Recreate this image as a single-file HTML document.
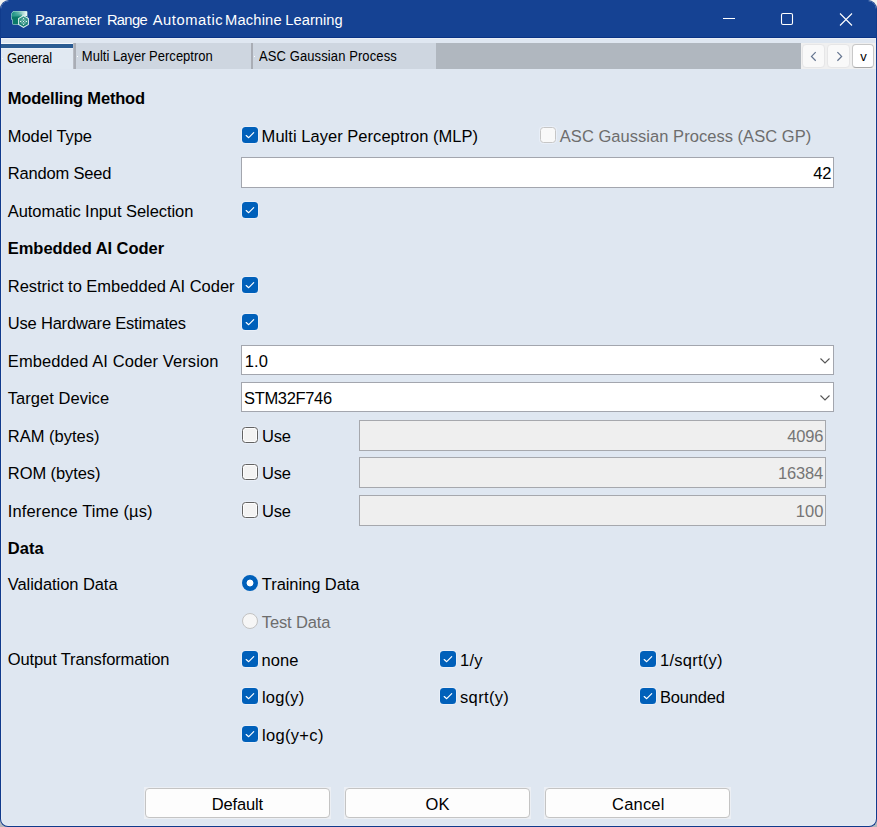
<!DOCTYPE html>
<html><head><meta charset="utf-8">
<title>Parameter Range Automatic Machine Learning</title>
<style>
html,body{margin:0;padding:0;}
body{width:877px;height:827px;overflow:hidden;background:#f3f3f0;font-family:"Liberation Sans",sans-serif;font-size:16.5px;color:#000;position:relative;}
#bgb{position:absolute;left:0;top:800px;width:877px;height:27px;background:#b4b7bc;}
#win{position:absolute;left:0;top:0;width:875px;height:825px;border:1px solid #103b8c;border-top-color:#154293;border-radius:9px 9px 8px 8px;background:#dfe7f1;overflow:hidden;box-shadow:inset 0 0 0 1px #e6ebf4;}
#title{position:absolute;left:0;top:0;width:875px;height:36px;background:#154293;color:#fff;border-bottom:1px solid #0a3384;}
#title .t{position:absolute;left:34px;top:8.5px;font-size:14.7px;line-height:20px;white-space:nowrap;letter-spacing:0.036px;}
#hl{position:absolute;left:0;top:37px;width:875px;height:1px;background:#ebeff6;}
#body{position:absolute;left:-1px;top:-1px;width:877px;height:827px;}
.tx{position:absolute;white-space:nowrap;line-height:20px;font-size:16.5px;transform:scaleY(1.04);transform-origin:0 16.7px;}
.tt{font-size:14.7px;color:#fff;transform:scaleY(1.055);transform-origin:0 15.1px;}
.b{font-weight:bold;}
.g{color:#6d6d6d;}
.g2{color:#757575;}
.cb{position:absolute;width:16px;height:16px;border-radius:3.5px;box-sizing:border-box;box-shadow:0 0 0 1px rgba(236,242,251,0.7);}
.cb.on{background:#0060ba;}
.cb svg{display:block;}
.cb.off{background:#f3f3f3;border:1px solid #626262;box-shadow:inset 0 0 0 1px #fdfdfd,0 0 0 1px rgba(236,242,251,0.7);}
.cb.dis{background:#f9f9f9;border:1px solid #c6c6c6;}
.rd{position:absolute;width:16px;height:16px;border-radius:50%;box-sizing:border-box;}
.rd.on{background:radial-gradient(circle at 50% 50%,#fff 0,#fff 3.0px,#0060ba 3.8px,#0060ba 100%);}
.rd.dis{background:#f6f6f6;border:1px solid #c2c2c2;}
.inp{position:absolute;background:#fff;border:1px solid #a3a6ae;}
.inp.d{background:#efefef;border-color:#a6a8ad;}
.chev{position:absolute;right:2.5px;top:11px;}
.bb{position:absolute;top:787px;width:187px;height:32px;background:#eceff4;}
.btn{position:absolute;left:1px;top:1px;width:183px;height:28px;border:1px solid #c4c4c4;border-radius:4px;background:#fdfdfd;text-align:center;line-height:29px;font-size:16.5px;}
/* tabs */
#tabbar{position:absolute;left:1px;top:43px;width:875px;height:26px;background:#b0b7bf;}
.tab{position:absolute;top:0;height:26px;background:#ced6e0;font-size:13px;line-height:16px;white-space:nowrap;}
.tab span{position:absolute;top:5.7px;transform:scaleY(1.08);transform-origin:0 12.5px;}
.dot{position:absolute;top:13px;width:1px;height:1px;background:#fff;}
.sep{position:absolute;top:0;width:3px;height:26px;background:linear-gradient(90deg,#b8bcc4 0,#b8bcc4 1px,#a9adb5 1px,#a9adb5 3px);}
#tabbtns{position:absolute;left:800px;top:0;width:75px;height:26px;background:#f0f0f0;}
.tb{position:absolute;top:1px;width:20px;height:22px;border:1px solid #e6e6e7;border-radius:4px;background:#f9f9f9;}
.tb svg{position:absolute;left:0;top:0;}
</style></head><body>
<div id="bgb"></div>
<div id="win">
<div id="title">
<svg style="position:absolute;left:-1px;top:-1px" width="40" height="37" viewBox="0 0 40 37">
<defs>
<linearGradient id="g1" x1="0" y1="0" x2="1" y2="0"><stop offset="0" stop-color="#169080"/><stop offset="0.45" stop-color="#5fb5a8"/><stop offset="1" stop-color="#f4fbfa"/></linearGradient>
<linearGradient id="g2" x1="0" y1="0" x2="0" y2="1"><stop offset="0" stop-color="#3e9c8f"/><stop offset="1" stop-color="#117a6c"/></linearGradient>
</defs>
<path d="M13.4 11 H26.4 Q27.4 11 27.4 12 V24.8 H13.6 Q12.3 24.8 12.3 23.4 V19.8 H11.2 V13.4 Z" fill="#b9e3dc"/>
<path d="M13.6 11.5 H26.2 Q26.9 11.5 26.9 12.2 V16.4 H11.8 V13.6 Z" fill="url(#g1)"/>
<path d="M11.8 16 H27 V24.3 H13.8 Q12.9 24.3 12.9 23.4 V19.4 H11.8 Z" fill="#0a7868"/>
<path d="M11.8 14.5 H22 V16.8 H11.8 Z" fill="#2e9a8b" opacity="0.7"/>
<path d="M23.5 15 L28.9 18.2 V24.8 L23.5 28 L18.1 24.8 V18.2 Z" fill="#e3f3f0"/>
<path d="M23.5 16.2 L27.9 18.8 V24.2 L23.5 26.8 L19.1 24.2 V18.8 Z" fill="url(#g2)"/>
<g fill="#e9f7f4">
<circle cx="23.5" cy="18.7" r="0.75"/><circle cx="23.5" cy="24.3" r="0.75"/><circle cx="20.7" cy="21.5" r="0.75"/><circle cx="26.3" cy="21.5" r="0.75"/>
<circle cx="22.1" cy="20.1" r="0.65"/><circle cx="24.9" cy="20.1" r="0.65"/><circle cx="22.1" cy="22.9" r="0.65"/><circle cx="24.9" cy="22.9" r="0.65"/><circle cx="23.5" cy="21.5" r="0.65"/>
</g>
</svg>

<svg style="position:absolute;left:716px;top:6px" width="150" height="26" viewBox="0 0 150 26" fill="none" stroke="#fff" stroke-width="1.1">
<path d="M6 11.5 H18"/>
<rect x="64.5" y="6.5" width="11" height="11" rx="1.5"/>
<path d="M123 6.5 L135 18.5 M135 6.5 L123 18.5"/>
</svg>
</div>
<div id="hl"></div>
<div id="body">
<div id="tabbar">
 <div class="tab" style="left:0;width:72px;background:#e1e9f2;"><div style="position:absolute;left:0;top:0;width:72px;height:1px;background:#f4f6fa"></div><div style="position:absolute;left:0;top:1px;width:73px;height:4px;background:#2a5b92"></div><div style="position:absolute;left:0;top:5px;width:72px;height:1px;background:#e9eef6"></div><i class="dot" style="left:1px;top:15px"></i><span style="left:6px;top:8.3px;letter-spacing:-0.18px">General</span></div>
 <div class="sep" style="left:72px"></div>
 <div class="tab" style="left:75px;width:175px"><i class="dot" style="left:1px"></i><span style="left:5.8px;letter-spacing:0.01px">Multi Layer Perceptron</span></div>
 <div class="sep" style="left:250px;width:2px;background:#a9adb5"></div>
 <div class="tab" style="left:252px;width:183px"><i class="dot" style="left:1px"></i><span style="left:6px;letter-spacing:0.1px">ASC Gaussian Process</span></div>
 <div id="tabbtns">
  <div class="tb" style="left:1px;width:21px"><svg width="20" height="22"><path d="M12.7 7.1 L8.5 11.4 L12.7 15.7" fill="none" stroke="#64748f" stroke-width="1.25"/></svg></div>
  <div class="tb" style="left:26px;width:21px"><svg width="20" height="22"><path d="M9.4 7.1 L13.6 11.4 L9.4 15.7" fill="none" stroke="#64748f" stroke-width="1.25"/></svg></div>
  <div class="tb" style="left:51px;background:#fff;border-color:#c8c8c8;border-bottom-color:#a8a8a8;font-size:13px;line-height:23.6px;text-align:center;text-indent:1px;">v</div>
 </div>
</div>
<div id="t0" class="tx b" style="left:7.80px;top:88.38px;letter-spacing:-0.200px">Modelling Method</div>
<div id="t1" class="tx " style="left:7.80px;top:125.88px;letter-spacing:-0.089px">Model Type</div>
<div id="t2" class="tx " style="left:7.80px;top:163.38px;letter-spacing:-0.186px">Random Seed</div>
<div id="t3" class="tx " style="left:7.80px;top:200.88px;letter-spacing:-0.063px">Automatic Input Selection</div>
<div id="t4" class="tx b" style="left:7.80px;top:238.38px;letter-spacing:-0.051px">Embedded AI Coder</div>
<div id="t5" class="tx " style="left:7.80px;top:275.88px;letter-spacing:-0.025px">Restrict to Embedded AI Coder</div>
<div id="t6" class="tx " style="left:7.80px;top:313.38px;letter-spacing:-0.199px">Use Hardware Estimates</div>
<div id="t7" class="tx " style="left:7.80px;top:350.88px;letter-spacing:0.099px">Embedded AI Coder Version</div>
<div id="t8" class="tx " style="left:7.80px;top:388.38px;letter-spacing:0.034px">Target Device</div>
<div id="t9" class="tx " style="left:7.80px;top:425.88px;letter-spacing:0.002px">RAM (bytes)</div>
<div id="t10" class="tx " style="left:7.80px;top:463.38px;letter-spacing:-0.083px">ROM (bytes)</div>
<div id="t11" class="tx " style="left:7.80px;top:500.88px;letter-spacing:0.126px">Inference Time (µs)</div>
<div id="t12" class="tx b" style="left:7.80px;top:538.38px;letter-spacing:-0.002px">Data</div>
<div id="t13" class="tx " style="left:7.80px;top:573.88px;letter-spacing:-0.065px">Validation Data</div>
<div id="t14" class="tx " style="left:7.80px;top:649.08px;letter-spacing:-0.121px">Output Transformation</div>
<div class="cb on" style="left:242px;top:127px"><svg width="16" height="16" viewBox="0 0 16 16"><path d="M4.2 8.5 L6.7 10.7 L11.7 5.7" fill="none" stroke="#fff" stroke-width="1.15" stroke-linecap="round" stroke-linejoin="round"/></svg></div>
<div id="t15" class="tx " style="left:261.60px;top:125.78px;letter-spacing:0.037px">Multi Layer Perceptron (MLP)</div>
<div class="cb dis" style="left:540px;top:127px"></div>
<div id="t16" class="tx g" style="left:559.80px;top:125.78px;letter-spacing:0.038px">ASC Gaussian Process (ASC GP)</div>
<div class="inp" style="left:241px;top:157px;width:591px;height:29px"></div>
<div id="t17" class="tx " style="left:813.18px;top:163.38px;letter-spacing:-0.010px">42</div>
<div class="cb on" style="left:242px;top:202px"><svg width="16" height="16" viewBox="0 0 16 16"><path d="M4.2 8.5 L6.7 10.7 L11.7 5.7" fill="none" stroke="#fff" stroke-width="1.15" stroke-linecap="round" stroke-linejoin="round"/></svg></div>
<div class="cb on" style="left:242px;top:277px"><svg width="16" height="16" viewBox="0 0 16 16"><path d="M4.2 8.5 L6.7 10.7 L11.7 5.7" fill="none" stroke="#fff" stroke-width="1.15" stroke-linecap="round" stroke-linejoin="round"/></svg></div>
<div class="cb on" style="left:242px;top:314px"><svg width="16" height="16" viewBox="0 0 16 16"><path d="M4.2 8.5 L6.7 10.7 L11.7 5.7" fill="none" stroke="#fff" stroke-width="1.15" stroke-linecap="round" stroke-linejoin="round"/></svg></div>
<div class="inp" style="left:241px;top:345px;width:591px;height:28px"><svg class="chev" width="12" height="8" viewBox="0 0 12 8"><path d="M1.5 1.5 L6 6 L10.5 1.5" fill="none" stroke="#555" stroke-width="1.1"/></svg></div>
<div id="t18" class="tx " style="left:244.80px;top:351.08px;letter-spacing:0.139px">1.0</div>
<div class="inp" style="left:241px;top:382px;width:591px;height:28px"><svg class="chev" width="12" height="8" viewBox="0 0 12 8"><path d="M1.5 1.5 L6 6 L10.5 1.5" fill="none" stroke="#555" stroke-width="1.1"/></svg></div>
<div id="t19" class="tx " style="left:244.10px;top:388.38px;letter-spacing:-0.350px">STM32F746</div>
<div class="cb off" style="left:242px;top:427px"></div>
<div id="t20" class="tx " style="left:262.10px;top:425.88px;letter-spacing:-0.200px">Use</div>
<div class="inp d" style="left:359px;top:420px;width:465px;height:29px"></div>
<div id="t21" class="tx g2" style="left:787.22px;top:425.88px;letter-spacing:-0.200px">4096</div>
<div class="cb off" style="left:242px;top:464px"></div>
<div id="t22" class="tx " style="left:262.10px;top:463.38px;letter-spacing:-0.200px">Use</div>
<div class="inp d" style="left:359px;top:457px;width:465px;height:29px"></div>
<div id="t23" class="tx g2" style="left:778.04px;top:463.38px;letter-spacing:-0.200px">16384</div>
<div class="cb off" style="left:242px;top:502px"></div>
<div id="t24" class="tx " style="left:262.10px;top:500.88px;letter-spacing:-0.200px">Use</div>
<div class="inp d" style="left:359px;top:495px;width:465px;height:29px"></div>
<div id="t25" class="tx g2" style="left:795.81px;top:500.88px;letter-spacing:0.001px">100</div>
<div class="rd on" style="left:242px;top:575px"></div>
<div id="t26" class="tx " style="left:261.80px;top:574.28px;letter-spacing:-0.065px">Training Data</div>
<div class="rd dis" style="left:242px;top:613px"></div>
<div id="t27" class="tx g" style="left:261.80px;top:612.08px;letter-spacing:-0.143px">Test Data</div>
<div class="cb on" style="left:242px;top:651px"><svg width="16" height="16" viewBox="0 0 16 16"><path d="M4.2 8.5 L6.7 10.7 L11.7 5.7" fill="none" stroke="#fff" stroke-width="1.15" stroke-linecap="round" stroke-linejoin="round"/></svg></div>
<div id="t28" class="tx " style="left:261.40px;top:649.68px;letter-spacing:0.082px">none</div>
<div class="cb on" style="left:440px;top:651px"><svg width="16" height="16" viewBox="0 0 16 16"><path d="M4.2 8.5 L6.7 10.7 L11.7 5.7" fill="none" stroke="#fff" stroke-width="1.15" stroke-linecap="round" stroke-linejoin="round"/></svg></div>
<div id="t29" class="tx " style="left:460.00px;top:649.68px;letter-spacing:0.200px">1/y</div>
<div class="cb on" style="left:640px;top:651px"><svg width="16" height="16" viewBox="0 0 16 16"><path d="M4.2 8.5 L6.7 10.7 L11.7 5.7" fill="none" stroke="#fff" stroke-width="1.15" stroke-linecap="round" stroke-linejoin="round"/></svg></div>
<div id="t30" class="tx " style="left:660.00px;top:649.68px;letter-spacing:0.253px">1/sqrt(y)</div>
<div class="cb on" style="left:242px;top:688px"><svg width="16" height="16" viewBox="0 0 16 16"><path d="M4.2 8.5 L6.7 10.7 L11.7 5.7" fill="none" stroke="#fff" stroke-width="1.15" stroke-linecap="round" stroke-linejoin="round"/></svg></div>
<div id="t31" class="tx " style="left:261.90px;top:687.08px;letter-spacing:0.200px">log(y)</div>
<div class="cb on" style="left:440px;top:688px"><svg width="16" height="16" viewBox="0 0 16 16"><path d="M4.2 8.5 L6.7 10.7 L11.7 5.7" fill="none" stroke="#fff" stroke-width="1.15" stroke-linecap="round" stroke-linejoin="round"/></svg></div>
<div id="t32" class="tx " style="left:460.00px;top:687.08px;letter-spacing:0.350px">sqrt(y)</div>
<div class="cb on" style="left:640px;top:688px"><svg width="16" height="16" viewBox="0 0 16 16"><path d="M4.2 8.5 L6.7 10.7 L11.7 5.7" fill="none" stroke="#fff" stroke-width="1.15" stroke-linecap="round" stroke-linejoin="round"/></svg></div>
<div id="t33" class="tx " style="left:660.00px;top:687.08px;letter-spacing:-0.193px">Bounded</div>
<div class="cb on" style="left:242px;top:726px"><svg width="16" height="16" viewBox="0 0 16 16"><path d="M4.2 8.5 L6.7 10.7 L11.7 5.7" fill="none" stroke="#fff" stroke-width="1.15" stroke-linecap="round" stroke-linejoin="round"/></svg></div>
<div id="t34" class="tx " style="left:261.90px;top:725.18px;letter-spacing:0.342px">log(y+c)</div>
<div class="bb" style="left:144px"><div class="btn"></div></div>
<div id="t35" class="tx " style="left:211.78px;top:794.38px;letter-spacing:-0.149px">Default</div>
<div class="bb" style="left:344px"><div class="btn"></div></div>
<div id="t36" class="tx " style="left:425.43px;top:794.38px;letter-spacing:0.200px">OK</div>
<div class="bb" style="left:544px"><div class="btn"></div></div>
<div id="t37" class="tx " style="left:612.06px;top:794.38px;letter-spacing:0.200px">Cancel</div>
<div id="t38" class="tx tt" style="left:34.89px;top:9.61px;letter-spacing:-0.237px">Parameter</div>
<div id="t39" class="tx tt" style="left:106.91px;top:9.61px;letter-spacing:-0.657px">Range</div>
<div id="t40" class="tx tt" style="left:152.73px;top:9.61px;letter-spacing:0.568px">Automatic</div>
<div id="t41" class="tx tt" style="left:225.04px;top:9.61px;letter-spacing:0.172px">Machine</div>
<div id="t42" class="tx tt" style="left:285.32px;top:9.61px;letter-spacing:0.023px">Learning</div>
</div>
</div>
</body></html>
